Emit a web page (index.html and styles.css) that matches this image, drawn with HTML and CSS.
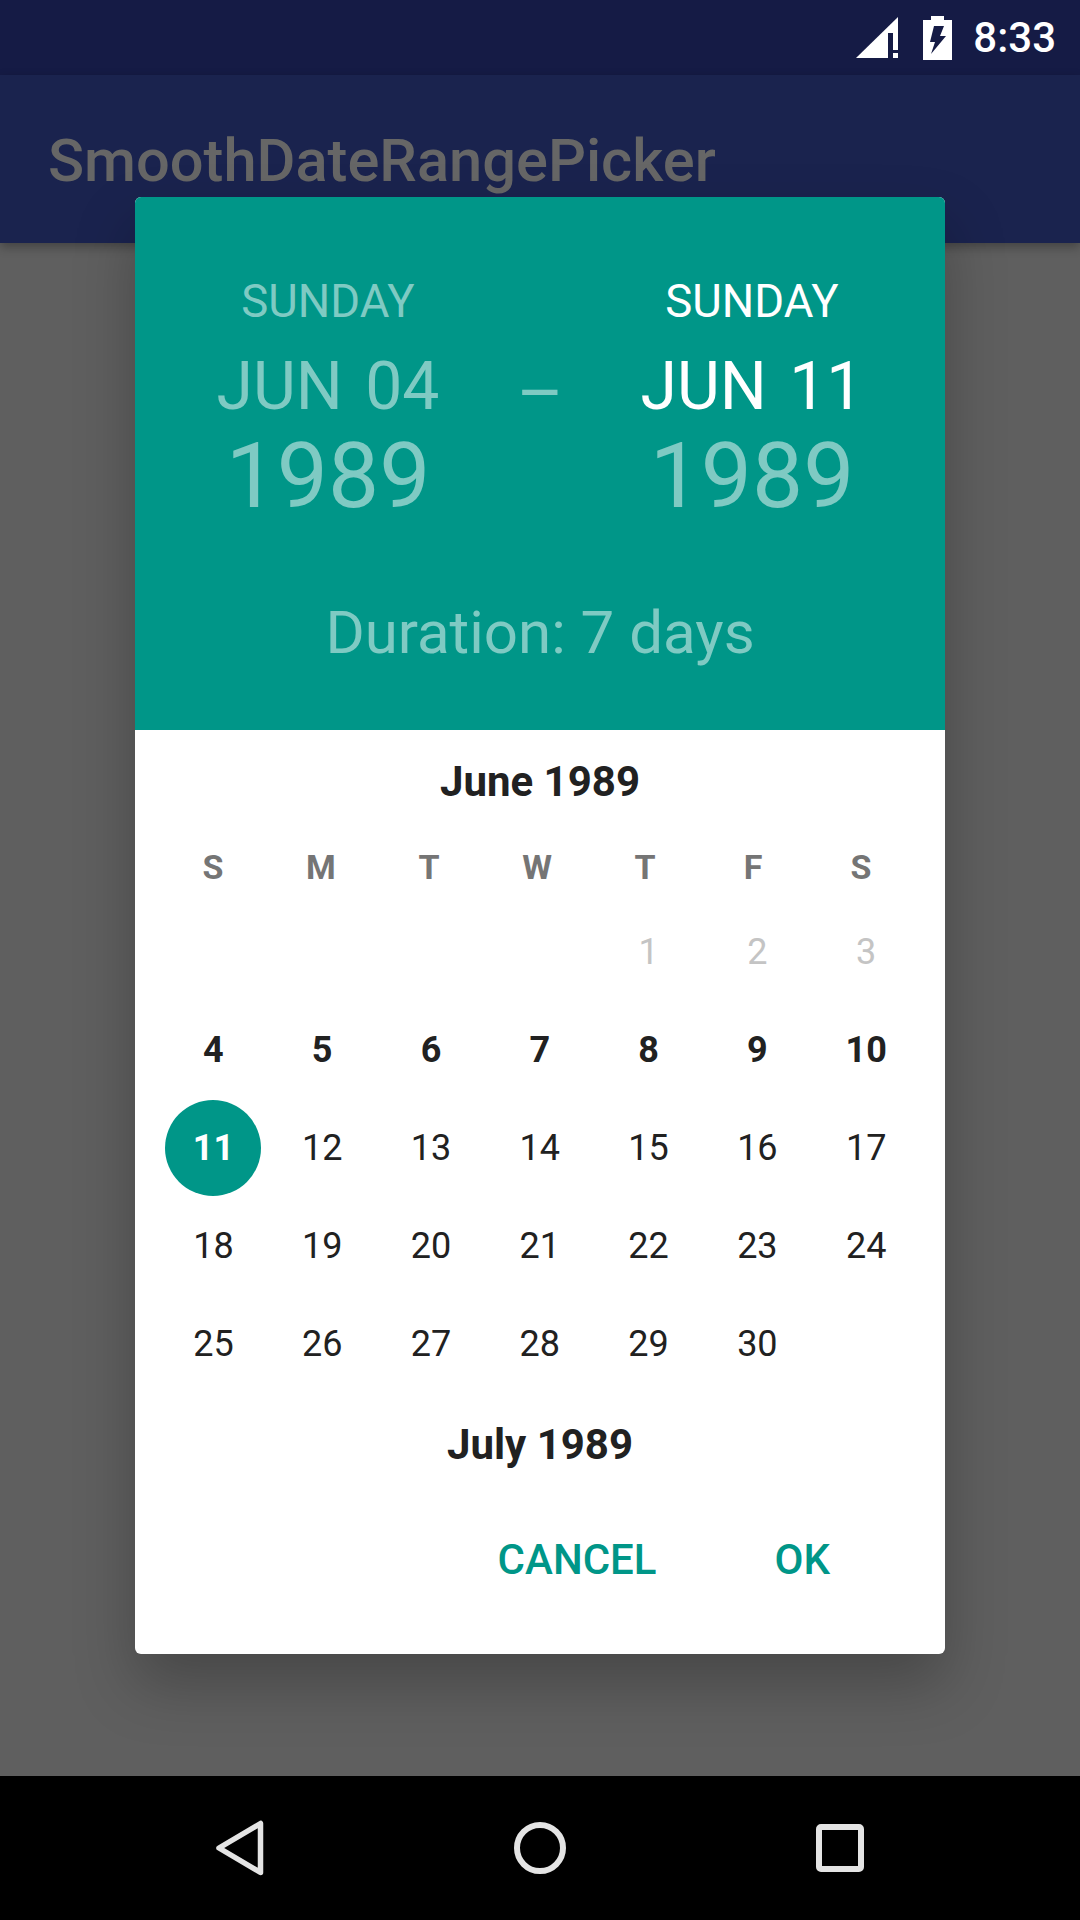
FILE: index.html
```html
<!DOCTYPE html>
<html lang="en">

<head>
    <meta charset="UTF-8">
    <title>SmoothDateRangePicker</title>
    <link rel="stylesheet" href="styles.css">
</head>

<body>
    <div class="status-bar">
        <svg class="icon-signal" width="42" height="41" viewBox="0 0 42 41">
            <path fill="#fff" d="M0 41 L42 0 V41 Z" />
            <rect x="32" y="16" width="5" height="25" fill="#151b45" />
            <rect x="37" y="33" width="5" height="3" fill="#151b45" />
        </svg>
        <svg class="icon-battery" width="29" height="44" viewBox="0 0 29 44">
            <path fill="#fff" d="M8 0 H21 V4 H29 V44 H0 V4 H8 Z" />
            <path fill="#151b45" d="M11 10 H21 L17 20 H23 L8 38 L12 26 H7 Z" />
        </svg>
        <span class="clock">8:33</span>
    </div>
    <div class="app-bar">SmoothDateRangePicker</div>
    <div class="content"></div>
    <div class="nav-bar">
        <svg width="49" height="56" viewBox="0 0 49 56">
            <path fill="none" stroke="#e4e4e4" stroke-width="5.5" stroke-linejoin="round" d="M45.5 3.5 V52.5 L4 28 Z" />
        </svg>
        <svg width="52" height="52" viewBox="0 0 52 52">
            <circle cx="26" cy="26" r="23" fill="none" stroke="#e4e4e4" stroke-width="6" />
        </svg>
        <svg width="48" height="48" viewBox="0 0 48 48">
            <rect x="3" y="3" width="42" height="42" rx="2" fill="none" stroke="#e4e4e4" stroke-width="6" />
        </svg>
    </div>

    <div class="dialog">
        <div class="header">
            <div class="range">
                <div class="date-col dim">
                    <div class="weekday">SUNDAY</div>
                    <div class="day">JUN 04</div>
                    <div class="year">1989</div>
                </div>
                <div class="dash">–</div>
                <div class="date-col">
                    <div class="weekday">SUNDAY</div>
                    <div class="day">JUN 11</div>
                    <div class="year dim">1989</div>
                </div>
            </div>
            <div class="duration">Duration: 7 days</div>
        </div>
        <div class="calendar">
            <div class="month">June 1989</div>
            <div class="week-head">
                <span>S</span><span>M</span><span>T</span><span>W</span><span>T</span><span>F</span><span>S</span>
            </div>
            <div class="days">
                <span></span><span></span><span></span><span></span>
                <span class="off">1</span><span class="off">2</span><span class="off">3</span>
                <span class="bold">4</span><span class="bold">5</span><span class="bold">6</span><span class="bold">7</span><span class="bold">8</span><span class="bold">9</span><span class="bold">10</span>
                <span class="picked">11</span><span>12</span><span>13</span><span>14</span><span>15</span><span>16</span><span>17</span>
                <span>18</span><span>19</span><span>20</span><span>21</span><span>22</span><span>23</span><span>24</span>
                <span>25</span><span>26</span><span>27</span><span>28</span><span>29</span><span>30</span><span></span>
            </div>
            <div class="month next">July 1989</div>
        </div>
        <div class="actions">
            <span class="btn">CANCEL</span>
            <span class="btn">OK</span>
        </div>
    </div>
</body>

</html>
```

FILE: styles.css
```css
* {
    box-sizing: border-box;
}

body {
    margin: 0;
    width: 1080px;
    height: 1920px;
    display: flex;
    flex-direction: column;
    font-family: Roboto, sans-serif;
    overflow: hidden;
    background: #5f5f5f;
}

.status-bar {
    height: 75px;
    background: #151b45;
    display: flex;
    align-items: center;
    justify-content: flex-end;
    color: #fff;
    padding-right: 24px;
}

.icon-signal {
    margin-right: 25px;
}

.icon-battery {
    margin-right: 21px;
}

.clock {
    font-size: 42px;
    font-weight: 500;
}

.app-bar {
    height: 168px;
    background: #1a234e;
    color: #666;
    font-size: 59.6px;
    font-weight: 500;
    padding: 51px 0 0 48px;
    box-shadow: 0 4px 10px rgba(0, 0, 0, 0.3);
    position: relative;
}

.content {
    flex: 1;
}

.nav-bar {
    height: 144px;
    background: #000;
    display: flex;
    align-items: center;
    justify-content: space-between;
    padding: 0 216px 0 215px;
}

.dialog {
    position: absolute;
    left: 135px;
    top: 197px;
    width: 810px;
    height: 1457px;
    background: #fff;
    border-radius: 6px;
    overflow: hidden;
    box-shadow: 0 30px 60px rgba(0, 0, 0, 0.25);
}

.header {
    height: 533px;
    background: #009688;
    color: #fff;
    text-align: center;
    padding-top: 80px;
}

.range {
    display: flex;
    justify-content: center;
}

.date-col {
    width: 358px;
}

.dim {
    color: #7fcac3;
}

.weekday {
    font-size: 45.5px;
    line-height: 50px;
}

.day {
    font-size: 66px;
    line-height: 84px;
    margin-top: 18px;
    word-spacing: 6px;
}

.year {
    font-size: 91px;
    line-height: 88px;
    margin-top: 3px;
}

.dash {
    width: 66px;
    color: #7fcac3;
    font-size: 72px;
    line-height: 84px;
    margin-top: 75px;
}

.duration {
    margin-top: 77px;
    color: #7fcac3;
    font-size: 60px;
}

.calendar {
    padding: 2px 24px 0;
}

.month {
    height: 100px;
    line-height: 100px;
    text-align: center;
    color: #212121;
    font-size: 42px;
    font-weight: 700;
}

.week-head {
    display: grid;
    grid-template-columns: repeat(7, 108px);
    height: 70px;
    line-height: 70px;
    text-align: center;
    color: #757575;
    font-size: 34px;
    font-weight: 700;
}

.days {
    display: grid;
    grid-template-columns: repeat(7, 108.8px);
    grid-auto-rows: 98px;
    margin-top: 1px;
    color: #212121;
    font-size: 36px;
}

.days span {
    display: flex;
    align-items: center;
    justify-content: center;
    position: relative;
}

.off {
    color: #c4c4c4;
}

.bold {
    font-weight: 700;
}

.picked {
    color: #fff;
    font-weight: 700;
    z-index: 0;
}

.picked::before {
    content: "";
    position: absolute;
    width: 96px;
    height: 96px;
    border-radius: 50%;
    background: #009688;
    z-index: -1;
}

.next {
    margin-top: 2px;
}

.actions {
    display: flex;
    justify-content: flex-end;
    gap: 118px;
    padding: 40px 115px 0 0;
    color: #009688;
    font-size: 42px;
    font-weight: 500;
}
```
